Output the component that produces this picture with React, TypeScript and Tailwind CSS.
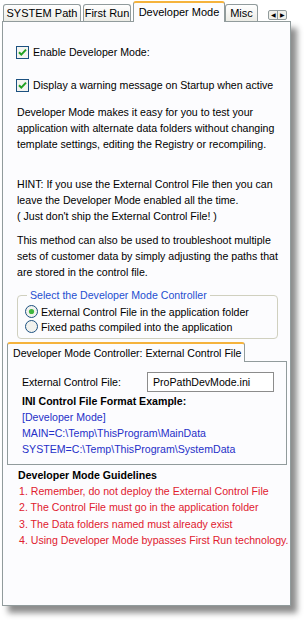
import React from 'react';

const font = { fontFamily: '"Liberation Sans", Arial, sans-serif' };

const Check = () => (
    <svg width="13" height="13" viewBox="0 0 13 13" className="shrink-0">
        <rect x="0.5" y="0.5" width="12" height="12" fill="#f4f4f0" stroke="#1c5180" />
        <path d="M3 6.2 L5.3 8.6 L10 3.6" fill="none" stroke="#21a121" strokeWidth="2" />
    </svg>
);

const Radio = ({ on }: { on?: boolean }) => (
    <svg width="13" height="13" viewBox="0 0 13 13" className="shrink-0">
        <circle cx="6.5" cy="6.5" r="6" fill="#f2f2ee" stroke="#1c5180" />
        {on && <circle cx="6.5" cy="6.5" r="2.6" fill="#3fb53f" />}
    </svg>
);

const Tab = ({ label, w }: { label: string; w: string }) => (
    <div className={`${w} h-[17px] border border-b-0 border-[#919b9c] rounded-t-[3px] bg-gradient-to-b from-white to-[#ececE6] flex items-center justify-center text-[11px] whitespace-nowrap text-black`}>
        {label}
    </div>
);

export default function App() {
    return (
        <div className="w-[307px] h-[622px] bg-white relative overflow-hidden" style={font}>
            {/* top tabs */}
            <div className="flex items-end h-[20px] pl-[3px] mt-[1px] relative z-10">
                <Tab label="SYSTEM Path" w="w-[78px]" />
                <div className="w-[2px]" />
                <Tab label="First Run" w="w-[48px]" />
                <div className="w-[2px]" />
                <div className="w-[92px] h-[21px] border border-b-0 border-[#919b9c] border-t-2 border-t-[#f5b33d] rounded-t-[3px] bg-[#fcfcfe] flex items-center justify-center text-[11px] whitespace-nowrap text-black -mb-[1px]">
                    Developer Mode
                </div>
                <Tab label="Misc" w="w-[33px]" />
                <div className="ml-[10px] mb-[1px] flex border border-[#919b9c] rounded-[2px] h-[10px] w-[19px] bg-[#f0f0ea]">
                    <div className="flex-1 flex items-center justify-center text-[6px] leading-none border-r border-[#919b9c]">◀</div>
                    <div className="flex-1 flex items-center justify-center text-[6px] leading-none">▶</div>
                </div>
            </div>

            {/* panel */}
            <div className="ml-[2px] w-[289px] h-[585px] border border-[#919b9c] bg-[#fcfcfe] shadow-[6px_7px_6px_rgba(0,0,0,0.45)] text-[10.6px] leading-[16px] text-black whitespace-nowrap">
                <div className="pl-[13px] pr-[6px] pt-[22px]">
                    <div className="flex items-center gap-[4px]">
                        <Check />
                        <span>Enable Developer Mode:</span>
                    </div>
                    <div className="flex items-center gap-[4px] mt-[17px]">
                        <Check />
                        <span>Display a warning message on Startup when active</span>
                    </div>
                    <p className="mt-[11px] pl-[1px]">
                        Developer Mode makes it easy for you to test your<br />
                        application with alternate data folders without changing<br />
                        template settings, editing the Registry or recompiling.
                    </p>
                    <p className="mt-[24px] pl-[1px]">
                        HINT: If you use the External Control File then you can<br />
                        leave the Developer Mode enabled all the time.<br />
                        ( Just don't ship the External Control File! )
                    </p>
                    <p className="mt-[8px] pl-[1px]">
                        This method can also be used to troubleshoot multiple<br />
                        sets of customer data by simply adjusting the paths that<br />
                        are stored in the control file.
                    </p>
                </div>

                {/* group box */}
                <div className="relative ml-[14px] mt-[15px] w-[261px] h-[44px] border border-[#d0d0bf] rounded-[4px]">
                    <div className="absolute -top-[9px] left-[9px] px-[3px] bg-[#fcfcfe] text-[#1f4fd0]">
                        Select the Developer Mode Controller
                    </div>
                    <div className="pl-[7px] pt-[8px]">
                        <div className="flex items-center gap-[3px] h-[15px]">
                            <Radio on />
                            <span>External Control File in the application folder</span>
                        </div>
                        <div className="flex items-center gap-[3px] h-[15px]">
                            <Radio />
                            <span>Fixed paths compiled into the application</span>
                        </div>
                    </div>
                </div>

                {/* inner tab control */}
                <div className="ml-[4px] mt-[3px] w-[280px]">
                    <div className="relative z-10 w-[238px] h-[20px] border border-b-0 border-[#919b9c] border-t-2 border-t-[#f5b33d] rounded-t-[3px] bg-[#fcfcfe] flex items-center pl-[5px] -mb-[1px]">
                        Developer Mode Controller: External Control File
                    </div>
                    <div className="h-[104px] border border-[#919b9c] bg-[#fcfcfe] pl-[14px] pt-[10px]">
                        <div className="flex items-center h-[20px]">
                            <span className="w-[125px]">External Control File:</span>
                            <div className="w-[127px] h-[20px] border border-[#8c8c8c] bg-white flex items-center pl-[5px]">
                                ProPathDevMode.ini
                            </div>
                        </div>
                        <div className="font-bold mt-[1px]">INI Control File Format Example:</div>
                        <div className="text-[#2630c8]">[Developer Mode]</div>
                        <div className="text-[#2630c8]">MAIN=C:\Temp\ThisProgram\MainData</div>
                        <div className="text-[#2630c8]">SYSTEM=C:\Temp\ThisProgram\SystemData</div>
                    </div>
                </div>

                {/* guidelines */}
                <div className="pl-[15px] mt-[2px]">
                    <div className="font-bold">Developer Mode Guidelines</div>
                    <div className="text-[#e0202f] pl-[1px]">
                        <div>1. Remember, do not deploy the External Control File</div>
                        <div>2. The Control File must go in the application folder</div>
                        <div className="mt-[1px]">3. The Data folders named must already exist</div>
                        <div>4. Using Developer Mode bypasses First Run technology.</div>
                    </div>
                </div>
            </div>
        </div>
    );
}
